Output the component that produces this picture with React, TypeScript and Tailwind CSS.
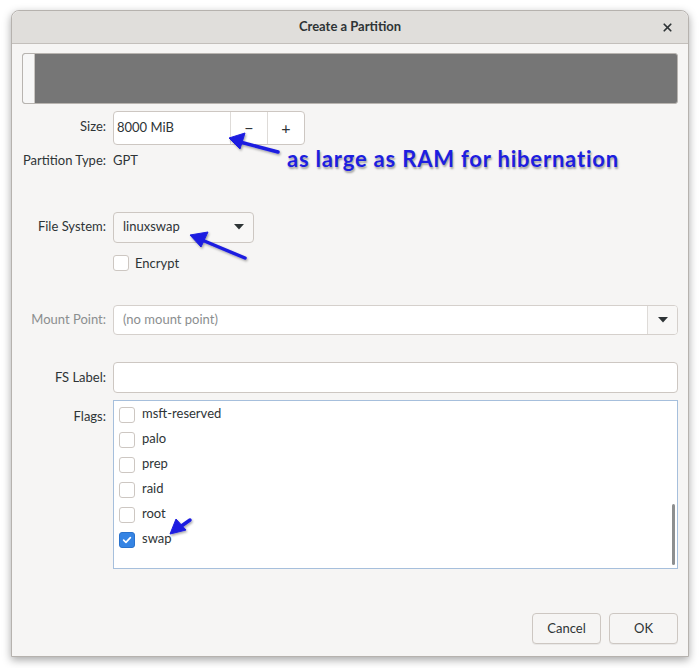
import { X } from "lucide-react"

const flags = [
  { name: "msft-reserved", checked: false },
  { name: "palo", checked: false },
  { name: "prep", checked: false },
  { name: "raid", checked: false },
  { name: "root", checked: false },
  { name: "swap", checked: true },
]

function Check({ checked }: { checked?: boolean }) {
  if (checked) {
    return (
      <span className="w-4 h-4 rounded-[3px] bg-[#3584e4] border border-[#2a72cc] flex items-center justify-center shrink-0">
        <svg viewBox="0 0 16 16" className="w-3 h-3">
          <path d="M3.5 8.2 L6.6 11.2 L12.5 4.8" fill="none" stroke="white" strokeWidth="2.2" strokeLinecap="round" strokeLinejoin="round" />
        </svg>
      </span>
    )
  }
  return <span className="w-4 h-4 rounded-[3px] bg-white border border-[#cdc7c2] shrink-0" />
}

function Caret({ color = "#2e3436" }: { color?: string }) {
  return (
    <svg viewBox="0 0 10 6" className="w-[10px] h-[6px]">
      <path d="M0 0 L10 0 L5 5.5 Z" fill={color} />
    </svg>
  )
}

export default function App() {
  return (
    <div className="w-[700px] h-[668px] bg-white relative overflow-hidden" style={{ fontFamily: "Lato, 'Noto Sans', sans-serif" }}>
      {/* Window */}
      <div className="absolute left-[11px] top-[10px] w-[678px] h-[647px] rounded-t-[8px] border border-[#b6b2ae] bg-[#f6f5f4] shadow-[0_3px_9px_rgba(0,0,0,0.35)] flex flex-col text-[13px] text-[#2e3436]">
        {/* Header */}
        <div className="h-[33px] shrink-0 rounded-t-[8px] bg-[#e0dedb] border-b border-[#c3bfbb] flex items-center justify-center relative">
          <span className="font-bold text-[13px] text-[#2e3436]">Create a Partition</span>
          <X className="absolute right-[14px] top-[10px] w-[13px] h-[13px]" strokeWidth={3.2} />
        </div>

        <div className="flex-1 flex flex-col px-[10px] pt-[9px] pb-[12px]">
          {/* Partition bar */}
          <div className="h-[51px] rounded-[3px] border border-[#b8b4b0] bg-[#767676] flex overflow-hidden">
            <div className="w-[12px] bg-[#f7f7f7] border-r border-[#c9c6c2]" />
          </div>

          {/* Form */}
          <div className="grid grid-cols-[84px_1fr] gap-x-[7px] mt-[7px] items-center">
            <span className="text-right self-start mt-[6px]">Size:</span>
            <div className="flex h-[34px] w-[192px] rounded-[4px] border border-[#cdc7c2] bg-white overflow-hidden">
              <span className="flex-1 flex items-center pl-[3px] pb-[1px]">8000 MiB</span>
              <span className="w-[37px] border-l border-[#dedbd8] flex items-center justify-center text-[16px]">−</span>
              <span className="w-[37px] border-l border-[#dedbd8] flex items-center justify-center text-[16px]">+</span>
            </div>

            <span className="text-right mt-[6px]">Partition Type:</span>
            <span className="mt-[6px]">GPT</span>

            <span className="text-right mt-[41px]">File System:</span>
            <div className="mt-[41px] flex items-center h-[31px] w-[141px] rounded-[4px] border border-[#cdc7c2] bg-[#f8f7f6] px-[9px]">
              <span className="flex-1 pb-[1px]">linuxswap</span>
              <Caret />
            </div>

            <span />
            <label className="flex items-center gap-[6px] mt-[11px]">
              <Check />
              <span>Encrypt</span>
            </label>

            <span className="text-right text-[#8b8e8f] mt-[32px]">Mount Point:</span>
            <div className="mt-[32px] flex h-[30px] rounded-[4px] border border-[#d5d0cc] bg-white overflow-hidden">
              <span className="flex-1 flex items-center pl-[9px] text-[#8b8e8f]">(no mount point)</span>
              <span className="w-[30px] border-l border-[#dedbd8] bg-[#f8f7f6] flex items-center justify-center">
                <Caret />
              </span>
            </div>

            <span className="text-right mt-[27px]">FS Label:</span>
            <div className="mt-[27px] h-[31px] rounded-[4px] border border-[#cdc7c2] bg-white" />

            <span className="text-right self-start mt-[14px]">Flags:</span>
            <div className="mt-[7px] h-[169px] border border-[#a6bfdc] bg-white relative flex flex-col pl-[5px] pt-[1px]">
              {flags.map((f) => (
                <label key={f.name} className="flex items-center gap-[7px] h-[25px]">
                  <Check checked={f.checked} />
                  <span className="pb-[1px]">{f.name}</span>
                </label>
              ))}
              <span className="absolute right-[2px] top-[103px] w-[3px] h-[61px] rounded-full bg-[#8d8f90]" />
            </div>
          </div>

          {/* Buttons */}
          <div className="mt-auto flex justify-end gap-[8px]">
            <button className="w-[69px] h-[31px] rounded-[4px] border border-[#cdc7c2] bg-[#f6f5f4] shadow-[0_1px_0_rgba(0,0,0,0.05)] text-[#2e3436]">Cancel</button>
            <button className="w-[69px] h-[31px] rounded-[4px] border border-[#cdc7c2] bg-[#f6f5f4] shadow-[0_1px_0_rgba(0,0,0,0.05)] text-[#2e3436]">OK</button>
          </div>
        </div>
      </div>

      {/* Annotations */}
      <span className="absolute left-[287px] top-[144px] text-[22px] leading-[30px] tracking-[0.8px] font-bold text-[#1d1ee0] [text-shadow:1px_2px_2px_rgba(0,0,0,0.35)]" style={{ fontFamily: "Lato, 'Open Sans', sans-serif" }}>
        as large as RAM for hibernation
      </span>
      <svg className="absolute left-0 top-0 pointer-events-none" width="700" height="668">
        <defs>
          <filter id="sh" x="-20%" y="-20%" width="140%" height="140%">
            <feDropShadow dx="1" dy="1.5" stdDeviation="1" floodColor="#000" floodOpacity="0.35" />
          </filter>
        </defs>
        <g fill="#1d1ee0" stroke="#1d1ee0" filter="url(#sh)">
          <line x1="278" y1="152" x2="240" y2="142" strokeWidth="3.5" strokeLinecap="round" />
          <path d="M229 138 L245 133 L240 149 Z" strokeWidth="1" strokeLinejoin="round" />
          <line x1="245" y1="258" x2="202" y2="240" strokeWidth="3.5" strokeLinecap="round" />
          <path d="M190 235 L208 232 L201 247 Z" strokeWidth="1" strokeLinejoin="round" />
          <line x1="190" y1="520" x2="180" y2="527" strokeWidth="3.5" strokeLinecap="round" />
          <path d="M170 534 L176 519 L186 530 Z" strokeWidth="1" strokeLinejoin="round" />
        </g>
      </svg>
    </div>
  )
}
